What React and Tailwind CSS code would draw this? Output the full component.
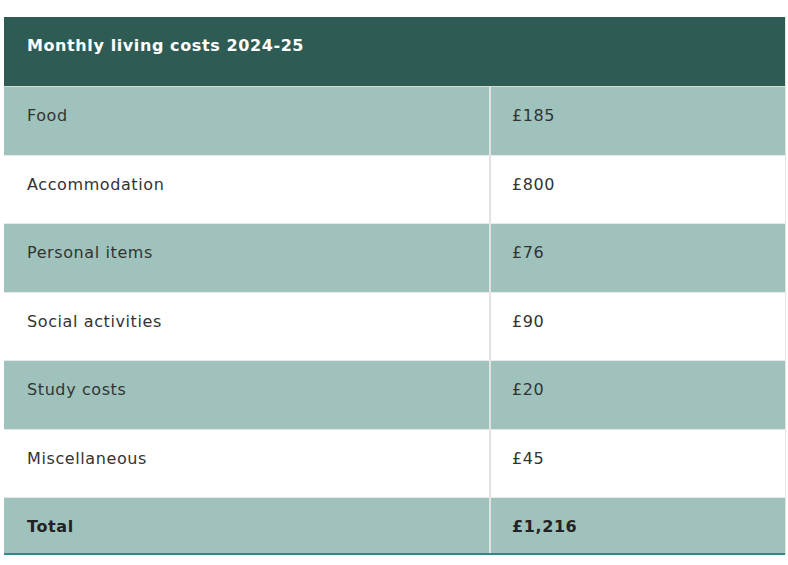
const ROWS = [
  { label: 'Food', value: '£185', shaded: true },
  { label: 'Accommodation', value: '£800', shaded: false },
  { label: 'Personal items', value: '£76', shaded: true },
  { label: 'Social activities', value: '£90', shaded: false },
  { label: 'Study costs', value: '£20', shaded: true },
  { label: 'Miscellaneous', value: '£45', shaded: false },
]

export default function App() {
  return (
    <div
      className="w-[788px] h-[565px] bg-white pt-[17px] pl-[4px] text-[#333333] tracking-[0.6px]"
      style={{ fontFamily: '"DejaVu Sans", Verdana, sans-serif' }}
    >
      <div className="w-[782px] border-r border-[#e5e5e5]">
        {/* Header */}
        <div className="h-[70px] bg-[#2e5c55] border-b border-[#d9d9d9] pl-[23px] pt-[18px] text-white font-bold text-[16px] leading-[22px]">
          Monthly living costs 2024-25
        </div>

        {ROWS.map((row) => (
          <div
            key={row.label}
            className={
              'flex h-[68.5px] border-b border-[#e8e8e8] text-[16px] leading-[22px] ' +
              (row.shaded ? 'bg-[#9fc3bc]' : 'bg-white')
            }
          >
            <div className="w-[487px] pl-[23px] pt-[18px] border-r-2 border-[#e3e3e3]">
              {row.label}
            </div>
            <div className="flex-1 pl-[21px] pt-[18px]">{row.value}</div>
          </div>
        ))}

        {/* Total */}
        <div className="flex h-[57px] bg-[#9fc3bc] border-b-2 border-[#2b8a8a] text-[16px] leading-[22px] font-bold text-[#222222]">
          <div className="w-[487px] pl-[23px] pt-[18px] border-r-2 border-[#e3e3e3]">Total</div>
          <div className="flex-1 pl-[21px] pt-[18px]">£1,216</div>
        </div>
      </div>
    </div>
  )
}
